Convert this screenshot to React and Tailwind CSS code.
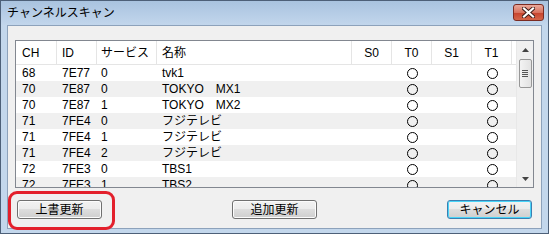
import React from 'react'

const rows = [
  { ch: '68', id: '7E77', sv: '0', name: 'tvk1' },
  { ch: '70', id: '7E87', sv: '0', name: 'TOKYO　MX1' },
  { ch: '70', id: '7E87', sv: '1', name: 'TOKYO　MX2' },
  { ch: '71', id: '7FE4', sv: '0', name: 'フジテレビ' },
  { ch: '71', id: '7FE4', sv: '1', name: 'フジテレビ' },
  { ch: '71', id: '7FE4', sv: '2', name: 'フジテレビ' },
  { ch: '72', id: '7FE3', sv: '0', name: 'TBS1' },
  { ch: '72', id: '7FE3', sv: '1', name: 'TBS2' },
]

const font = { fontFamily: '"Liberation Sans", "Noto Sans CJK JP", sans-serif' }

function Circle() {
  return <div className="w-[11px] h-[11px] rounded-full border border-black" />
}

function Btn({ children, focus }) {
  return (
    <button
      className={`w-[85px] h-[19px] rounded-[3px] border text-[12px] leading-none text-black bg-[linear-gradient(#f2f2f2_0%,#ebebeb_50%,#dddddd_50%,#cfcfcf_100%)] ${
        focus ? 'border-[#3c7fb1] shadow-[inset_0_0_0_1px_#48d4f8]' : 'border-[#707070] shadow-[inset_0_0_0_1px_#fcfcfc]'
      }`}
    >
      {children}
    </button>
  )
}

export default function App() {
  return (
    <div className="relative w-[549px] h-[234px] overflow-hidden bg-[#c3d7ec] border border-[#4d6078]" style={font}>
      {/* title bar */}
      <div className="h-[24px] flex items-center justify-between pl-[6px] pr-[4px] bg-[linear-gradient(#a9c3df,#c2d6ec)]">
        <span className="text-[12px] text-black">チャンネルスキャン</span>
        <div className="w-[31px] h-[17px] mt-[-2px] rounded-[3px] border border-[#7b2b22] bg-[linear-gradient(#e9a99c_0%,#d9735f_50%,#c8452f_55%,#d4664a_100%)] flex items-center justify-center">
          <svg width="13" height="11" viewBox="0 0 13 11">
            <path d="M2 1.5 L11 9.5 M11 1.5 L2 9.5" stroke="#3a1a16" strokeWidth="4" strokeLinecap="square" />
            <path d="M2 1.5 L11 9.5 M11 1.5 L2 9.5" stroke="#ffffff" strokeWidth="2.2" strokeLinecap="square" />
          </svg>
        </div>
      </div>

      {/* client area */}
      <div className="mx-[6px] h-[204px] bg-[#f0f0f0] border border-[#8da2bb] pt-[14px] px-[7px]">
        <div className="h-[148px] border border-[#828790] bg-white flex overflow-hidden">
          <div className="flex-1 overflow-hidden text-[12px] text-black">
            {/* header */}
            <div className="flex h-[24px] items-center border-b border-[#e5e5e5]">
              <div className="w-[41px] pl-[6px] h-full flex items-center border-r border-[#e5e5e5]">CH</div>
              <div className="w-[40px] pl-[5px] h-full flex items-center border-r border-[#e5e5e5]">ID</div>
              <div className="w-[60px] pl-[4px] h-full flex items-center border-r border-[#e5e5e5]">サービス</div>
              <div className="w-[195px] pl-[5px] h-full flex items-center border-r border-[#e5e5e5]">名称</div>
              {['S0', 'T0', 'S1', 'T1'].map((h) => (
                <div key={h} className="w-[40px] h-full flex items-center justify-center border-r border-[#e5e5e5]">
                  {h}
                </div>
              ))}
            </div>
            {rows.map((r, i) => (
              <div key={i} className={`flex h-[16px] items-center ${i % 2 ? 'bg-[#f0f0f0]' : 'bg-white'}`}>
                <div className="w-[41px] pl-[6px]">{r.ch}</div>
                <div className="w-[40px] pl-[5px]">{r.id}</div>
                <div className="w-[60px] pl-[4px]">{r.sv}</div>
                <div className="w-[195px] pl-[5px]">{r.name}</div>
                <div className="w-[40px]" />
                <div className="w-[40px] flex justify-center"><Circle /></div>
                <div className="w-[40px]" />
                <div className="w-[40px] flex justify-center"><Circle /></div>
              </div>
            ))}
          </div>
          {/* scrollbar */}
          <div className="w-[17px] bg-[#f0f0f0] border-l border-[#e8e8e8] flex flex-col items-center">
            <div className="h-[17px] flex items-center justify-center">
              <svg width="7" height="4" viewBox="0 0 7 4"><path d="M0 4 L3.5 0 L7 4 Z" fill="#444" /></svg>
            </div>
            <div className="w-[13px] h-[29px] mt-[1px] rounded-[2px] border border-[#979797] bg-[linear-gradient(90deg,#f3f3f3,#e2e2e2)] flex flex-col items-center justify-center gap-[1px]">
              <div className="w-[6px] h-[1px] bg-[#555]" />
              <div className="w-[6px] h-[1px] bg-[#555]" />
              <div className="w-[6px] h-[1px] bg-[#555]" />
              <div className="w-[6px] h-[1px] bg-[#555]" />
            </div>
            <div className="flex-1" />
            <div className="h-[17px] flex items-center justify-center">
              <svg width="7" height="4" viewBox="0 0 7 4"><path d="M0 0 L3.5 4 L7 0 Z" fill="#444" /></svg>
            </div>
          </div>
        </div>

        <div className="flex justify-between items-center mt-[12px] px-[2px]">
          <Btn>上書更新</Btn>
          <Btn>追加更新</Btn>
          <Btn focus>キャンセル</Btn>
        </div>
      </div>

      {/* annotation */}
      <div className="absolute left-[7px] top-[190px] w-[107px] h-[39px] rounded-[9px] border-[3px] border-[#e3202c]" />
    </div>
  )
}
